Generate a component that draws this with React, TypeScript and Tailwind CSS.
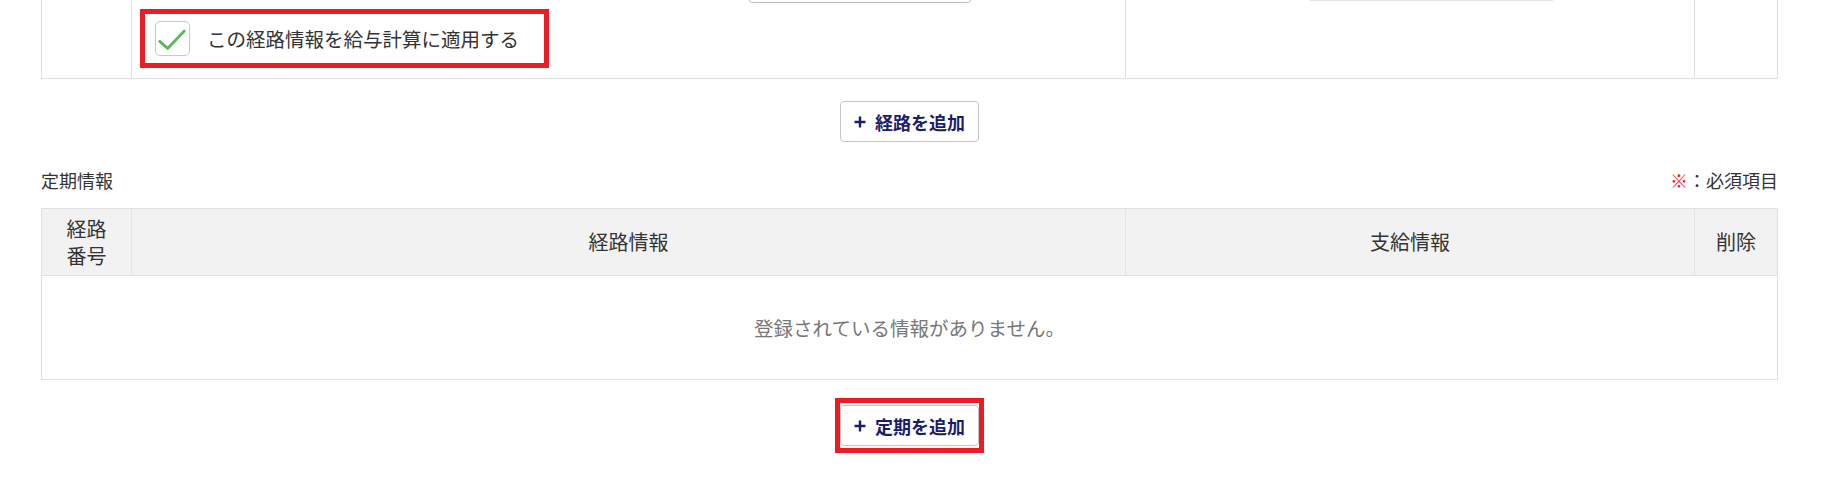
import React from "react";

// ---- small drawings ----

function PlusIcon() {
  return (
    <svg width="12" height="12" viewBox="0 0 12 12" className="shrink-0">
      <path d="M6 0.5V11.5M0.5 6H11.5" stroke="#1c1c6c" strokeWidth="2.4" />
    </svg>
  );
}

function CheckMark() {
  return (
    <svg width="35" height="35" viewBox="0 0 35 35">
      <polyline
        points="4,20.5 12.3,28 30,9.5"
        fill="none"
        stroke="#5cb85c"
        strokeWidth="3"
        strokeLinecap="round"
        strokeLinejoin="round"
      />
    </svg>
  );
}

function AddButton({ label }: { label: string }) {
  return (
    <button className="flex h-[41px] w-[139px] items-center justify-center gap-[9px] rounded-[4px] border border-[#c4c4c4] bg-white">
      <PlusIcon />
      <span className="text-[18px] font-bold leading-none text-[#1c1c6c]">{label}</span>
    </button>
  );
}

// ---- page ----

export default function App() {
  return (
    <div
      className="h-[477px] w-full overflow-hidden bg-white pl-[41px] pr-[43px] text-[#333]"
      style={{ fontFamily: '"Noto Sans CJK JP", "Noto Sans", sans-serif' }}
    >
      {/* Tail of the route table above */}
      <div className="-mt-[47px] flex border-x border-b border-[#e0e0e0]">
        <div className="w-[90px] shrink-0 border-r border-[#e0e0e0]" />
        <div className="w-[994px] shrink-0 border-r border-[#e0e0e0] pb-[10px] pl-[8px] pt-[8px]">
          <div className="ml-[608px] h-[42px] w-[224px] rounded-[5px] border border-[#bdbdbd]" />
          <div className="mt-[6px] flex h-[59px] w-[409px] items-center gap-[17px] border-[5px] border-[#ec1c24] pl-[10px]">
            <div className="flex h-[35px] w-[35px] items-center justify-center rounded-[5px] border border-[#c8c8c8] bg-white">
              <CheckMark />
            </div>
            <span className="text-[19.5px] leading-none text-[#333]">この経路情報を給与計算に適用する</span>
          </div>
        </div>
        <div className="w-[569px] shrink-0 border-r border-[#e0e0e0] pt-[6px]">
          <div className="ml-[184px] h-[42px] w-[243px] border-b border-[#e2e2e2]" />
        </div>
        <div className="flex-1" />
      </div>

      <div className="mt-[22px] flex justify-center">
        <AddButton label="経路を追加" />
      </div>

      {/* 定期情報 */}
      <div className="mt-[25px] flex items-center justify-between text-[18px] leading-[27px]">
        <span>定期情報</span>
        <span>
          <span className="text-[#ff1a1a]">※</span>：必須項目
        </span>
      </div>

      <div className="mt-[14px] border border-[#e0e0e0]">
        <div className="flex h-[67px] border-b border-[#e0e0e0] bg-[#f2f2f2] text-[20px] text-[#333]">
          <div className="flex w-[90px] shrink-0 flex-col items-center justify-center border-r border-[#e4e4e4] leading-[27px]">
            <span>経路</span>
            <span>番号</span>
          </div>
          <div className="flex w-[994px] shrink-0 items-center justify-center border-r border-[#e4e4e4]">経路情報</div>
          <div className="flex w-[569px] shrink-0 items-center justify-center border-r border-[#e4e4e4]">支給情報</div>
          <div className="flex flex-1 items-center justify-center">削除</div>
        </div>
        <div className="flex h-[103px] items-center justify-center text-[19.5px] text-[#777]">
          登録されている情報がありません。
        </div>
      </div>

      <div className="mt-[18px] flex justify-center">
        <div className="border-[5px] border-[#ec1c24] py-[2px]">
          <AddButton label="定期を追加" />
        </div>
      </div>
    </div>
  );
}
